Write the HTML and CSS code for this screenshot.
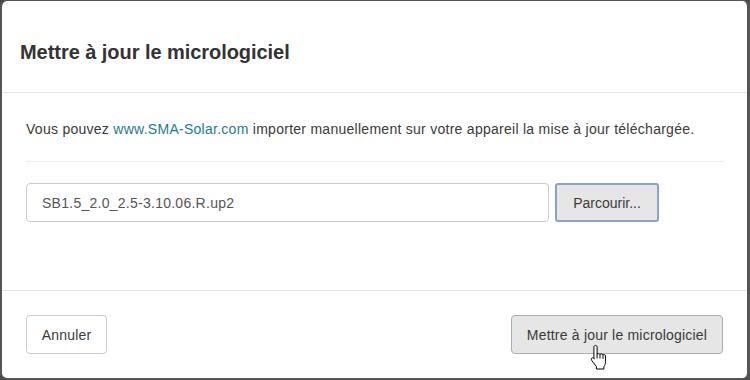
FILE: index.html
```
<!DOCTYPE html>
<html lang="fr">
<head>
	<meta charset="UTF-8">
	<title>Mettre à jour le micrologiciel</title>
	<link rel="stylesheet" href="styles.css">
</head>
<body>
	<div class="modal">
		<div class="modal-header">
			<h4 class="modal-title">Mettre à jour le micrologiciel</h4>
		</div>
		<div class="modal-body">
			<p>Vous pouvez <a href="#">www.SMA-Solar.com</a> importer manuellement sur votre appareil la mise à jour téléchargée.</p>
			<hr>
			<div class="file-row">
				<input class="file-name" type="text" value="SB1.5_2.0_2.5-3.10.06.R.up2" readonly>
				<button class="btn btn-browse">Parcourir...</button>
			</div>
		</div>
		<div class="modal-footer">
			<button class="btn btn-cancel">Annuler</button>
			<button class="btn btn-update">Mettre à jour le micrologiciel</button>
			<!-- curseur de la souris -->
			<svg class="cursor" width="18" height="26" viewBox="0 0 18 26">
				<path d="M5.5 1.5c1 0 1.6.7 1.6 1.6v7.2c.3-.8 2.6-.8 2.9.2.4-.8 2.5-.8 2.9.4.5-.7 2.6-.5 2.6 1v5.6c0 2.4-.6 3.7-1.6 5.1v2.4H6.4v-2.4L1.8 16.6c-.8-1-.6-2.4.6-2.7.9-.2 1.6.3 2 .9l-.5-.4V3.1c0-.9.6-1.6 1.6-1.6z" fill="#fff" stroke="#000" stroke-width="1" stroke-linejoin="round"/>
				<path d="M10 10.5v4M13 11v3.8M7.1 10.3v4.2" stroke="#000" stroke-width="1" fill="none"/>
			</svg>
		</div>
	</div>
</body>
</html>
```

FILE: styles.css
```
*{
	padding: 0;
	margin: 0;
	box-sizing: border-box;
}
body{
	background: #4a4a4a;
	font-family: "Liberation Sans", Arial, sans-serif;
	font-size: 14px;
	color: #3a3a3a;
}
a{
	color: #1d7c8a;
	text-decoration: none;
}
.modal{
	width: 750px;
	height: 380px;
	background: #fff;
	border-style: solid;
	border-color: #555;
	border-width: 1px 3px 2px 2px;
	border-radius: 7px;
	display: flex;
	flex-direction: column;
	overflow: hidden;
}
.modal-header{
	height: 92px;
	padding: 39px 18px 0;
	border-bottom: 1px solid #e5e5e5;
}
.modal-title{
	font-size: 20px;
	font-weight: bold;
	line-height: 24px;
	color: #333;
	letter-spacing: -0.05px;
}
.modal-body{
	height: 198px;
	padding: 26px 23px 0 24px;
	border-bottom: 1px solid #e5e5e5;
}
.modal-body p{
	line-height: 20px;
	letter-spacing: 0.27px;
}
hr{
	border: 0;
	border-top: 1px solid #eee;
	margin: 22px 0 21px;
}
.file-row{
	display: flex;
	gap: 6px;
}
.file-name{
	width: 523px;
	height: 39px;
	border: 1px solid #ccc;
	border-radius: 4px;
	padding: 0 15px;
	font-family: inherit;
	font-size: 14px;
	letter-spacing: 0.26px;
	color: #555;
	outline: none;
}
.btn{
	height: 39px;
	border: 1px solid #ccc;
	border-radius: 4px;
	background: #fff;
	font-family: inherit;
	font-size: 14px;
	letter-spacing: 0.2px;
	color: #3a3a3a;
	padding: 0 12px;
}
.btn-browse{
	width: 104px;
	background: #e6e6e6;
	border: 2px solid #87a3c8;
	border-radius: 3px;
	letter-spacing: 0;
}
.modal-footer{
	flex: 1;
	position: relative;
	display: flex;
	justify-content: space-between;
	padding: 24px 24px 0 24px;
}
.btn-cancel{
	width: 81px;
}
.btn-update{
	width: 212px;
	background: #e6e6e6;
	border-color: #adadad;
}
.cursor{
	position: absolute;
	left: 588px;
	top: 53px;
}
```
